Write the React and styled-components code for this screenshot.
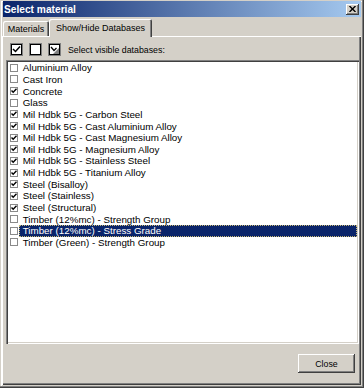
import React from "react";
import styled, { createGlobalStyle } from "styled-components";

const GlobalStyle = createGlobalStyle`
  html, body { margin: 0; padding: 0; }
  body { background: #ffffff; font-family: "Liberation Sans", Arial, sans-serif; }
`;

const Window = styled.div`
  width: 364px;
  height: 388px;
  box-sizing: border-box;
  background: #d4d0c8;
  padding: 1px 3px 3px 2px;
  display: flex;
  flex-direction: column;
  box-shadow: inset -1px -1px #404040, inset -2px -2px #808080,
    inset 1px 1px #d4d0c8, inset 2px 2px #ffffff;
`;

const TitleBar = styled.div`
  height: 16px;
  margin-left: 1px;
  display: flex;
  align-items: center;
  justify-content: space-between;
  padding: 0 2px 0 1px;
  background: linear-gradient(to right, #0a246a, #a6caf0);
`;

const Title = styled.span`
  color: #ffffff;
  font-weight: bold;
  font-size: 10.2px;
`;

const CloseBox = styled.div`
  width: 13px;
  height: 11px;
  background: #d4d0c8;
  display: flex;
  align-items: center;
  justify-content: center;
  box-shadow: inset -1px -1px #404040, inset 1px 1px #ffffff,
    inset -2px -2px #808080;
`;

const TabStrip = styled.div`
  height: 19px;
  display: flex;
  align-items: flex-end;
  padding-left: 1px;
  position: relative;
  z-index: 1;
`;

const Tab = styled.div`
  width: ${(p) => (p.$active ? 103 : 46)}px;
  box-sizing: border-box;
  height: ${(p) => (p.$active ? 18 : 15)}px;
  margin: ${(p) => (p.$active ? "0 0 -1px 0" : "0")};
  display: flex;
  align-items: center;
  justify-content: center;
  font-size: 9px;
  color: #000000;
  background: #d4d0c8;
  border-radius: 2px 2px 0 0;
  box-shadow: inset 1px 1px #ffffff, inset -1px 0 #404040,
    inset -2px 0 #808080;
`;

const Panel = styled.div`
  flex: 1;
  display: flex;
  flex-direction: column;
  padding: 1px 2px 2px 4px;
  box-shadow: inset 1px 1px #ffffff, inset -1px -1px #404040,
    inset -2px -2px #808080;
`;

const Toolbar = styled.div`
  display: flex;
  align-items: center;
  gap: 6px;
  margin: 6px 0 0 4px;
  height: 13px;
`;

const ToolLabel = styled.span`
  font-size: 8.8px;
  margin-left: 1px;
`;

const List = styled.div`
  margin-top: 4px;
  height: 284px;
  box-sizing: border-box;
  background: #ffffff;
  padding: 2px 2px 2px 4px;
  box-shadow: inset 1px 1px #808080, inset 2px 2px #404040,
    inset -1px -1px #ffffff, inset -2px -2px #d4d0c8;
`;

const Row = styled.div`
  height: 11.65px;
  display: flex;
  align-items: center;
`;

const Check = styled.div`
  width: 8px;
  height: 8px;
  flex: none;
  box-sizing: border-box;
  border: 1px solid #8a8a8a;
  background: #ffffff;
  display: flex;
  align-items: center;
  justify-content: center;
`;

const Label = styled.div`
  flex: 1;
  height: 100%;
  margin-left: 1px;
  padding-left: 3.7px;
  display: flex;
  align-items: center;
  font-size: 9.8px;
  white-space: nowrap;
  color: ${(p) => (p.$selected ? "#ffffff" : "#000000")};
  background: ${(p) => (p.$selected ? "#0a246a" : "transparent")};
  outline: ${(p) => (p.$selected ? "1px dotted #c8b874" : "none")};
  outline-offset: -1px;
`;

const Footer = styled.div`
  flex: 1;
  display: flex;
  justify-content: flex-end;
  align-items: flex-start;
  padding: 10px 4px 0 0;
`;

const Button = styled.button`
  width: 57px;
  height: 19px;
  font-family: "Liberation Sans", Arial, sans-serif;
  font-size: 8.8px;
  color: #000000;
  background: #d4d0c8;
  border: none;
  padding: 0;
  box-shadow: inset -1px -1px #404040, inset 1px 1px #ffffff,
    inset -2px -2px #808080;
`;

const Tick = () => (
  <svg width="6" height="6" viewBox="0 0 6 6">
    <path d="M0.5 2.5 L2.2 4.3 L5.5 0.8" fill="none" stroke="#000" strokeWidth="1.4" />
  </svg>
);

const ToolIcon = ({ kind }) => (
  <svg width="13" height="13" viewBox="0 0 13 13">
    <rect x="0.5" y="0.5" width="12" height="12" fill="#fff" stroke="#808080" />
    <rect x="1.5" y="1.5" width="10" height="10" fill="#fff" stroke="#000" />
    {kind === "toggle" && <path d="M11 5 L11 11 L5 11 Z" fill="#808080" />}
    {kind === "check" && (
      <path d="M3 6 L5.5 8.5 L10 3.5" fill="none" stroke="#000" strokeWidth="1.5" />
    )}
    {kind === "toggle" && (
      <path d="M3 4 L6 7.5 L8.5 5" fill="none" stroke="#000" strokeWidth="1.3" />
    )}
  </svg>
);

const databases = [
  ["Aluminium Alloy", false],
  ["Cast Iron", false],
  ["Concrete", true],
  ["Glass", false],
  ["Mil Hdbk 5G - Carbon Steel", true],
  ["Mil Hdbk 5G - Cast Aluminium Alloy", true],
  ["Mil Hdbk 5G - Cast Magnesium Alloy", true],
  ["Mil Hdbk 5G - Magnesium Alloy", true],
  ["Mil Hdbk 5G - Stainless Steel", true],
  ["Mil Hdbk 5G - Titanium Alloy", true],
  ["Steel (Bisalloy)", true],
  ["Steel (Stainless)", true],
  ["Steel (Structural)", true],
  ["Timber (12%mc) - Strength Group", false],
  ["Timber (12%mc) - Stress Grade", false],
  ["Timber (Green) - Strength Group", false],
];

export default function App() {
  const selected = 14;
  return (
    <>
      <GlobalStyle />
      <Window>
        <TitleBar>
          <Title>Select material</Title>
          <CloseBox>
            <svg width="7" height="6" viewBox="0 0 7 6">
              <path d="M0.5 0 L6.5 6 M6.5 0 L0.5 6" stroke="#000" strokeWidth="1.4" />
            </svg>
          </CloseBox>
        </TitleBar>
        <TabStrip>
          <Tab>Materials</Tab>
          <Tab $active>Show/Hide Databases</Tab>
        </TabStrip>
        <Panel>
          <Toolbar>
            <ToolIcon kind="check" />
            <ToolIcon kind="none" />
            <ToolIcon kind="toggle" />
            <ToolLabel>Select visible databases:</ToolLabel>
          </Toolbar>
          <List>
            {databases.map(([name, on], i) => (
              <Row key={name}>
                <Check>{on && <Tick />}</Check>
                <Label $selected={i === selected}>{name}</Label>
              </Row>
            ))}
          </List>
          <Footer>
            <Button>Close</Button>
          </Footer>
        </Panel>
      </Window>
    </>
  );
}
